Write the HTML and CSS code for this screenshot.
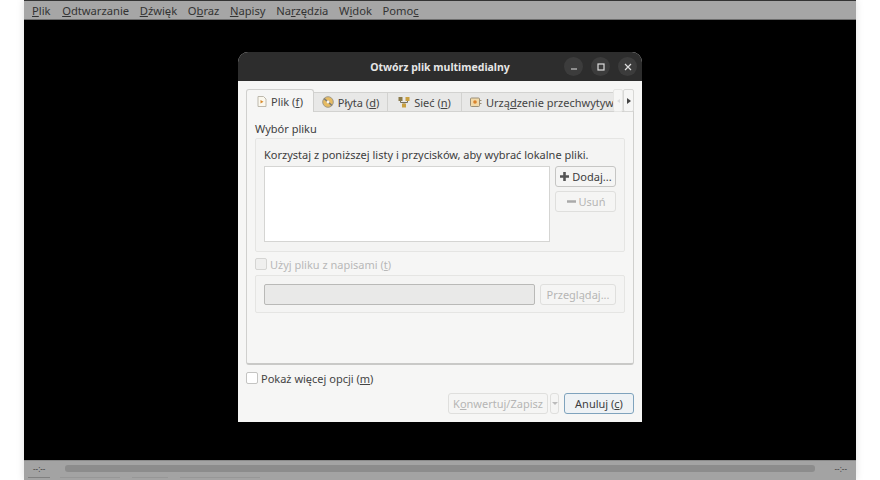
FILE: index.html
```html
<!DOCTYPE html>
<html lang="pl">
<head>
    <meta charset="UTF-8">
    <title>VLC</title>
    <link rel="stylesheet" href="styles.css">
</head>
<body>
    <div class="player">
        <div class="menubar">
            <span><u>P</u>lik</span>
            <span><u>O</u>dtwarzanie</span>
            <span><u>D</u>źwięk</span>
            <span>O<u>b</u>raz</span>
            <span><u>N</u>apisy</span>
            <span>Na<u>r</u>zędzia</span>
            <span>W<u>i</u>dok</span>
            <span>Pomo<u>c</u></span>
        </div>
        <div class="video"></div>
        <div class="seekbar">
            <span class="time">--:--</span>
            <div class="track"></div>
            <span class="time">--:--</span>
        </div>
        <div class="controls">
            <span class="ctrl ctrl-a"></span>
            <span class="ctrl ctrl-b"></span>
            <span class="ctrl ctrl-c"></span>
            <span class="ctrl ctrl-d"></span>
        </div>
    </div>

    <div class="dialog">
        <div class="titlebar">
            <span class="title">Otwórz plik multimedialny</span>
            <div class="win-buttons">
                <button class="win-btn"><svg width="10" height="10" viewBox="0 0 10 10"><path d="M2 7h6" stroke="#ddd" stroke-width="1.2"/></svg></button>
                <button class="win-btn"><svg width="10" height="10" viewBox="0 0 10 10"><rect x="2" y="2" width="6" height="6" fill="none" stroke="#ddd" stroke-width="1.2"/></svg></button>
                <button class="win-btn"><svg width="10" height="10" viewBox="0 0 10 10"><path d="M2 2l6 6M8 2l-6 6" stroke="#ddd" stroke-width="1.2"/></svg></button>
            </div>
        </div>
        <div class="content">
            <div class="tabs">
                <div class="tab active">
                    <svg width="10" height="11" viewBox="0 0 10 11"><path d="M1 .5h5.500l2.500 2.500v7.500h-8z" fill="#fbf8ee" stroke="#bdb8ac"/><path d="M3.500 4l3 1.700-3 1.700z" fill="#d98a2b"/></svg>
                    <span>Plik (<u>f</u>)</span>
                </div>
                <div class="tab">
                    <svg width="12" height="12" viewBox="0 0 12 12"><circle cx="6" cy="6" r="5.300" fill="#e6bb62" stroke="#a09a88"/><path d="M2 2.500l8 7" stroke="#7a7a78" stroke-width="1.600"/><circle cx="6" cy="6" r="1.400" fill="#f6f6f5"/></svg>
                    <span>Płyta (<u>d</u>)</span>
                </div>
                <div class="tab">
                    <svg width="12" height="12" viewBox="0 0 12 12"><rect x="0.500" y="1" width="4" height="4" fill="#8a7a4a"/><rect x="7.500" y="1" width="4" height="4" fill="#c9a040"/><rect x="4" y="7.500" width="4" height="4" fill="#c9a040"/><path d="M2.500 5v1.500h7V5M6 6.500v1" fill="none" stroke="#77705c"/></svg>
                    <span>Sieć (<u>n</u>)</span>
                </div>
                <div class="tab tab-cut">
                    <svg width="12" height="11" viewBox="0 0 12 11"><rect x="0.500" y="1" width="9" height="8.500" rx="1" fill="#f2d9a8" stroke="#9a8f78"/><circle cx="5" cy="5" r="1.800" fill="#d9822b"/><path d="M10 3.500h1.500M10 6.500h1.500" stroke="#9a8f78"/></svg>
                    <span>Urzą<u>d</u>zenie przechwytywania</span>
                </div>
                <div class="tab-scroll">
                    <span class="scroll-btn off"><i class="arrow-left"></i></span>
                    <span class="scroll-btn"><i class="arrow-right"></i></span>
                </div>
            </div>
            <div class="pane">
                <div class="group-label">Wybór pliku</div>
                <div class="group file-group">
                    <div class="hint">Korzystaj z poniższej listy i przycisków, aby wybrać lokalne pliki.</div>
                    <div class="file-row">
                        <div class="file-list"></div>
                        <div class="file-buttons">
                            <button class="btn"><svg width="11" height="11" viewBox="0 0 11 11"><path d="M5.500 1v9M1 5.500h9" stroke="#555" stroke-width="2.600"/></svg><span>Dodaj...</span></button>
                            <button class="btn" disabled><svg width="11" height="11" viewBox="0 0 11 11"><path d="M1 5.500h9" stroke="#aaa" stroke-width="2.600"/></svg><span>Usuń</span></button>
                        </div>
                    </div>
                </div>
                <label class="check disabled"><span class="box"></span><span>Użyj pliku z napisami (<u>t</u>)</span></label>
                <div class="group sub-group">
                    <div class="sub-input"></div>
                    <button class="btn browse" disabled>Przeglądaj...</button>
                </div>
            </div>
            <label class="check more"><span class="box"></span><span>Pokaż więcej opcji (<u>m</u>)</span></label>
            <div class="actions">
                <button class="btn convert" disabled><span>K<u>o</u>nwertuj/Zapisz</span></button>
                <button class="btn drop" disabled><i class="arrow-down"></i></button>
                <button class="btn cancel"><span>Anuluj (<u>c</u>)</span></button>
            </div>
        </div>
    </div>
</body>
</html>
```

FILE: styles.css
```css
/* page and player window */
html, body {
    margin: 0;
    height: 100%;
    overflow: hidden;
}
body {
    background: #fff;
    font-family: "Noto Sans", "Open Sans", sans-serif;
    font-size: 11px;
    color: #3d3d3d;
}
.player {
    width: 832px;
    height: 480px;
    margin-left: 24px;
    display: flex;
    flex-direction: column;
    border-top: 1px solid #333;
    box-sizing: border-box;
    box-shadow: 0 0 8px rgba(0, 0, 0, 0.12);
    overflow: hidden;
}
.menubar {
    height: 18px;
    flex: none;
    display: flex;
    align-items: center;
    gap: 10.600px;
    padding-left: 8px;
    background: #a6a6a6;
    border-bottom: 1px solid #6e6e6e;
    color: #333;
    font-size: 11.200px;
}
.menubar span:first-child {
    margin-right: 1px;
}
.video {
    flex: 1;
    background: #000;
}
.seekbar {
    height: 15px;
    flex: none;
    display: flex;
    align-items: center;
    gap: 20px;
    padding: 0 9px;
    background: #a3a3a3;
    border-top: 1px solid #8a8a8a;
}
.time {
    font-size: 8px;
    color: #444;
}
.track {
    flex: 1;
    height: 7px;
    border-radius: 3px;
    background: #8c8c8c;
}
.controls {
    height: 4px;
    flex: none;
    display: flex;
    align-items: flex-end;
    background: #a3a3a3;
}
.ctrl {
    height: 2px;
    border-top: 1px solid #979797;
}
.ctrl-a {
    width: 22px;
    margin-left: 4px;
    border-color: #808080;
}
.ctrl-b {
    width: 60px;
    margin-left: 10px;
}
.ctrl-c {
    width: 36px;
    margin-left: 12px;
}
.ctrl-d {
    width: 80px;
    margin-left: 12px;
}

/* dialog */
.dialog {
    position: absolute;
    left: 238px;
    top: 52px;
    width: 404px;
    height: 370px;
    display: flex;
    flex-direction: column;
    background: #f6f6f5;
    border-radius: 10px 10px 0 0;
    overflow: hidden;
}
.titlebar {
    height: 29px;
    flex: none;
    position: relative;
    display: flex;
    align-items: center;
    justify-content: center;
    background: #2d2d2d;
    color: #e6e6e6;
}
.title {
    font-weight: 700;
    font-size: 10.500px;
}
.win-buttons {
    position: absolute;
    right: 5px;
    top: 5px;
    display: flex;
    gap: 8px;
}
.win-btn {
    width: 19px;
    height: 19px;
    padding: 0;
    border: none;
    border-radius: 50%;
    background: #3c3c3c;
    display: flex;
    align-items: center;
    justify-content: center;
}
.content {
    flex: 1;
    display: flex;
    flex-direction: column;
    padding: 8px 8px 8px;
}

/* tabs */
.tabs {
    height: 23px;
    flex: none;
    display: flex;
    align-items: flex-end;
    position: relative;
    z-index: 1;
}
.tab {
    height: 20px;
    flex: none;
    display: flex;
    align-items: center;
    justify-content: center;
    gap: 4px;
    width: 74px;
    box-sizing: border-box;
    background: #e8e8e7;
    border: 1px solid #d2d2d0;
    border-left: none;
    color: #444;
}
.tab svg {
    flex: none;
}
.tab.active {
    height: 23px;
    width: 68px;
    background: #f6f6f5;
    border: 1px solid #d0d0ce;
    border-bottom: none;
    border-radius: 3px 3px 0 0;
}
.tab-cut {
    flex: 1 1 0;
    min-width: 0;
    overflow: hidden;
    white-space: nowrap;
    justify-content: flex-start;
    padding-left: 8px;
    border-right: none;
}
.tab-scroll {
    height: 23px;
    flex: none;
    display: flex;
}
.scroll-btn {
    width: 11px;
    height: 23px;
    box-sizing: border-box;
    display: flex;
    align-items: center;
    justify-content: center;
    background: #f6f6f5;
    border: 1px solid #d8d8d6;
    border-radius: 2px;
}
.scroll-btn.off {
    width: 10px;
    border-color: #e6e6e4;
}
.arrow-right {
    border-left: 4px solid #444;
    border-top: 3px solid transparent;
    border-bottom: 3px solid transparent;
}
.arrow-left {
    border-right: 3px solid #ddd;
    border-top: 2px solid transparent;
    border-bottom: 2px solid transparent;
}
.arrow-down {
    display: block;
    border-top: 3px solid #bbb;
    border-left: 3px solid transparent;
    border-right: 3px solid transparent;
}
.pane {
    height: 254px;
    flex: none;
    box-sizing: border-box;
    margin-top: -1px;
    padding: 9px 8px 0;
    border: 1px solid #d0d0ce;
    border-bottom: 2px solid #c9c9c7;
    border-radius: 0 0 3px 3px;
    background: #f6f6f5;
}
.group-label {
    height: 17px;
    line-height: 16px;
}
.group {
    box-sizing: border-box;
    border: 1px solid #e5e5e3;
    border-radius: 2px;
    background: #f4f4f3;
}
.file-group {
    height: 114px;
    padding: 7px 8px 0;
}
.hint {
    height: 20px;
    line-height: 17px;
}
.file-row {
    display: flex;
    gap: 5px;
}
.file-list {
    width: 286px;
    height: 76px;
    box-sizing: border-box;
    background: #fff;
    border: 1px solid #d5d5d3;
}
.file-buttons {
    display: flex;
    flex-direction: column;
    gap: 4px;
}
.btn {
    height: 21px;
    padding: 0;
    box-sizing: border-box;
    display: flex;
    align-items: center;
    justify-content: center;
    gap: 2px;
    font: inherit;
    color: #3d3d3d;
    background: #f5f5f4;
    border: 1px solid #c6c6c4;
    border-radius: 3px;
}
.btn:disabled {
    color: #b5b5b5;
    border-color: #dfdfdd;
}
.file-buttons .btn {
    width: 61px;
}
.check {
    display: flex;
    align-items: center;
    gap: 3px;
}
.check.disabled {
    height: 22px;
    margin-top: 1px;
    color: #b8b8b8;
}
.box {
    width: 12px;
    height: 12px;
    flex: none;
    box-sizing: border-box;
    background: #fff;
    border: 1px solid #c4c4c2;
    border-radius: 2px;
}
.check.disabled .box {
    background: #efefee;
    border-color: #d5d5d3;
}
.sub-group {
    height: 38px;
    display: flex;
    align-items: center;
    gap: 5px;
    padding: 0 8px;
}
.sub-input {
    width: 271px;
    height: 21px;
    box-sizing: border-box;
    background: #e9e9e8;
    border: 1px solid #b9b9b7;
    border-radius: 2px;
}
.browse {
    width: 76px;
}
.more {
    height: 16px;
    margin-top: 5px;
    color: #444;
}
.actions {
    display: flex;
    justify-content: flex-end;
    align-items: center;
    margin-top: 7px;
}
.convert {
    width: 100px;
}
.drop {
    width: 9px;
    margin-left: 2px;
}
.cancel {
    width: 70px;
    margin-left: 5px;
    background: #eef2f5;
    border-color: #7fa3bd;
}
```
